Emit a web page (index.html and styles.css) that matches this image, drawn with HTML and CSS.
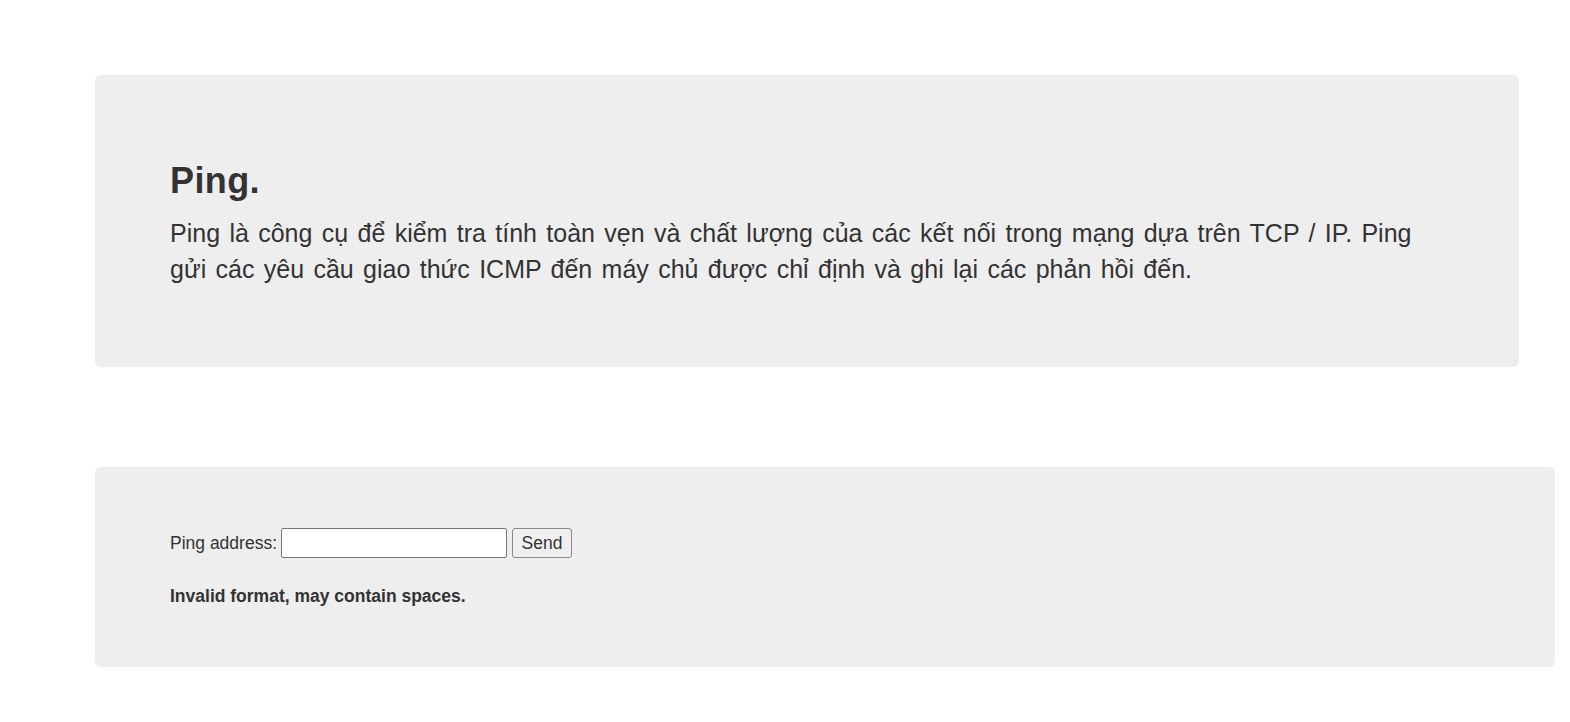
FILE: index.html
```html
<!DOCTYPE html>
<html lang="vi">
<head>
<meta charset="utf-8">
<title>Ping</title>
<link rel="stylesheet" href="styles.css">
</head>
<body>
<main class="page">
  <section class="intro">
    <h1 class="intro-title">Ping.</h1>
    <p class="intro-text">Ping là công cụ để kiểm tra tính toàn vẹn và chất lượng của các kết nối trong mạng dựa trên TCP / IP. Ping gửi các yêu cầu giao thức ICMP đến máy chủ được chỉ định và ghi lại các phản hồi đến.</p>
  </section>
  <section class="tool">
    <form class="ping-form">
      <label class="ping-label" for="addr">Ping address:</label>
      <input class="ping-input" id="addr" type="text">
      <button class="ping-btn" type="button">Send</button>
    </form>
    <p class="ping-error">Invalid format, may contain spaces.</p>
  </section>
</main>
</body>
</html>
```
FILE: styles.css
```css
html, body {
  margin: 0;
  padding: 0;
  background: #fff;
}
body {
  font-family: "Liberation Sans", Arial, sans-serif;
  color: #333;
}
.page {
  padding: 75px 0 0 95px;
  display: flex;
  flex-direction: column;
  gap: 100px;
}
.intro {
  box-sizing: border-box;
  width: 1424px;
  height: 292px;
  background: #eee;
  border-radius: 6px;
  padding: 86px 75px 0 75px;
}
.intro-title {
  margin: 0 0 14px 0;
  font-size: 36px;
  line-height: 1.1;
  font-weight: bold;
  letter-spacing: 0.4px;
}
.intro-text {
  margin: 0;
  max-width: 1258px;
  font-size: 25px;
  line-height: 36px;
  word-spacing: 2.4px;
}
.tool {
  box-sizing: border-box;
  width: 1460px;
  height: 200px;
  background: #eee;
  border-radius: 6px;
  padding: 61px 75px;
}
.ping-form {
  margin: 0;
  display: flex;
  align-items: center;
  font-size: 17.5px;
}
.ping-label {
  margin-right: 4px;
}
.ping-input {
  box-sizing: border-box;
  width: 226px;
  height: 30px;
  margin: 0 5px 0 0;
  border: 1px solid #767676;
  border-radius: 2px;
  background: #fff;
  font: inherit;
  padding: 1px 2px;
}
.ping-btn {
  box-sizing: border-box;
  width: 60px;
  height: 30px;
  margin: 0;
  padding: 0;
  border: 1px solid #8a8a8a;
  border-radius: 3px;
  background: #efefef;
  color: #333;
  font-family: inherit;
  font-size: 17.5px;
}
.ping-error {
  margin: 28px 0 0 0;
  font-size: 17.5px;
  font-weight: bold;
  line-height: 20px;
}
```
